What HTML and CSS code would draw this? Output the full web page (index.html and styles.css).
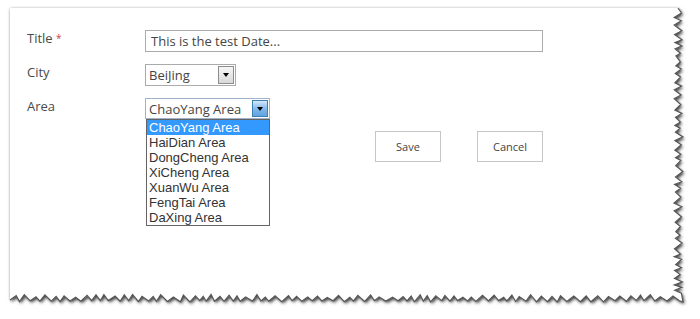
FILE: index.html
```html
<!DOCTYPE html>
<html lang="en">
<head>
  <meta charset="UTF-8">
  <meta name="viewport" content="width=device-width, initial-scale=1.0">
  <title>New Item</title>
  <link rel="stylesheet" href="styles.css">
</head>
<body>

  <div class="page">
    <svg class="paper" width="700" height="319" viewBox="0 0 700 319">
      <defs>
        <filter id="paper-shadow" x="-5%" y="-5%" width="110%" height="115%">
          <feDropShadow dx="0" dy="0" stdDeviation="1.6" flood-color="#000" flood-opacity="0.22"/>
          <feDropShadow dx="1.5" dy="2" stdDeviation="1.5" flood-color="#000" flood-opacity="0.7"/>
        </filter>
      </defs>
      <path id="paper-fill" fill="#fff" filter="url(#paper-shadow)" d="M10 8 H678 V300 H10 Z"/>
      <path id="paper-edge" fill="none" stroke="#555" stroke-width="1.2" d=""/>
    </svg>

    <div class="form">
      <div class="row">
        <label class="label">Title <span class="req">*</span></label>
        <input class="text-box" type="text" value="This is the test Date...">
      </div>

      <div class="row">
        <label class="label">City</label>
        <div class="select city-select">
          <span class="select-value">BeiJing</span>
          <span class="select-btn"><span class="caret"></span></span>
        </div>
      </div>

      <div class="row row-area">
        <label class="label">Area</label>
        <div class="select area-select is-open">
          <span class="select-value">ChaoYang Area</span>
          <span class="select-btn"><span class="caret"></span></span>
          <ul class="options">
            <li class="selected">ChaoYang Area</li>
            <li>HaiDian Area</li>
            <li>DongCheng Area</li>
            <li>XiCheng Area</li>
            <li>XuanWu Area</li>
            <li>FengTai Area</li>
            <li>DaXing Area</li>
          </ul>
        </div>
      </div>

      <div class="actions">
        <button class="form-button">Save</button>
        <button class="form-button">Cancel</button>
      </div>
    </div>
  </div>

  <script src="torn.js"></script>
</body>
</html>
```

FILE: styles.css
```css
body {
  margin: 0;
  background: #fff;
  font-family: 'Open Sans', 'Noto Sans', sans-serif;
  color: #444;
}

.page {
  position: relative;
  width: 700px;
  height: 319px;
  overflow: hidden;
}

.paper {
  position: absolute;
  top: 0;
  left: 0;
}

.form {
  position: relative;
  padding: 30px 0 0 27px;
  width: 516px;
}

.row {
  display: flex;
  align-items: flex-start;
  height: 22px;
  margin-bottom: 12px;
}

.row-area {
  height: 21px;
}

.label {
  width: 118px;
  flex: none;
  font-size: 13px;
  line-height: 16px;
  color: #4a4a4a;
}

.req {
  color: #c44;
  font-size: 10px;
  vertical-align: top;
}

.text-box {
  box-sizing: border-box;
  width: 398px;
  height: 22px;
  margin: 0;
  padding: 0 5px;
  border: 1px solid #ababab;
  font-family: 'Open Sans', 'Noto Sans', sans-serif;
  font-size: 13px;
  color: #444;
  background: #fff;
  outline: none;
}

.select {
  position: relative;
  box-sizing: border-box;
  display: flex;
  align-items: center;
  height: 22px;
  border: 1px solid #ababab;
  background: #fff;
  font-size: 13px;
  color: #444;
}

.city-select {
  width: 91px;
}

.area-select {
  width: 125px;
  height: 21px;
  border-color: #9fb4cc;
}

.select-value {
  flex: 1;
  padding-left: 3px;
  line-height: 18px;
}

.select-btn {
  box-sizing: border-box;
  display: flex;
  align-items: center;
  justify-content: center;
  width: 16px;
  height: 18px;
  margin-right: 1px;
  border: 1px solid #8d8d8d;
  background: linear-gradient(to bottom, #f6f6f6, #d9d9d9);
}

.area-select .select-btn {
  height: 17px;
  border-color: #3c7fb1;
  background: linear-gradient(to bottom, #d4e8fa, #7fb7ea 55%, #5fa3e3);
}

.caret {
  width: 0;
  height: 0;
  border-left: 3.5px solid transparent;
  border-right: 3.5px solid transparent;
  border-top: 4px solid #000;
}

.options {
  position: absolute;
  top: 20px;
  left: 0;
  width: 122px;
  margin: 0;
  padding: 0;
  list-style: none;
  border: 1px solid #646464;
  background: #fff;
  font-family: 'Liberation Sans', Arial, sans-serif;
  font-size: 13px;
  line-height: 15px;
  color: #333;
}

.options li {
  padding-left: 2px;
}

.options .selected {
  background: #3399ff;
  color: #fff;
}

.actions {
  display: flex;
  justify-content: flex-end;
  gap: 36px;
  margin-top: 1px;
}

.form-button {
  width: 66px;
  height: 31px;
  margin: 0;
  padding: 0;
  border: 1px solid #c6c6c6;
  background: #fff;
  font-family: 'Open Sans', 'Noto Sans', sans-serif;
  font-size: 11px;
  color: #444;
}
```

FILE: torn.js
```js
// rough torn edge along the right and bottom of the sheet
(function () {
  var seed = 7;
  function rand() {
    seed = (seed * 9301 + 49297) % 233280;
    return seed / 233280;
  }

  var edge = [];
  var i = 0;

  var y = 13;
  while (y < 297) {
    var x = i % 2 ? 674 + rand() * 2 : 680 + rand() * 3;
    edge.push([x.toFixed(1), y.toFixed(1)]);
    y += 2.5 + rand() * 3.5;
    i++;
  }
  edge.push([683, 302]);

  var bx = 679;
  i = 0;
  while (bx > 14) {
    var by = i % 2 ? 294.5 + rand() * 3 : 300.5 + rand() * 1.5;
    edge.push([bx.toFixed(1), by.toFixed(1)]);
    bx -= 3 + rand() * 4;
    i++;
  }
  edge.push([10, 300]);

  var line = edge.map(function (p) { return p[0] + ' ' + p[1]; }).join(' L');

  document.getElementById('paper-fill').setAttribute('d', 'M10 8 L678 8 L' + line + ' Z');
  document.getElementById('paper-edge').setAttribute('d', 'M678 8 L' + line);
})();
```
